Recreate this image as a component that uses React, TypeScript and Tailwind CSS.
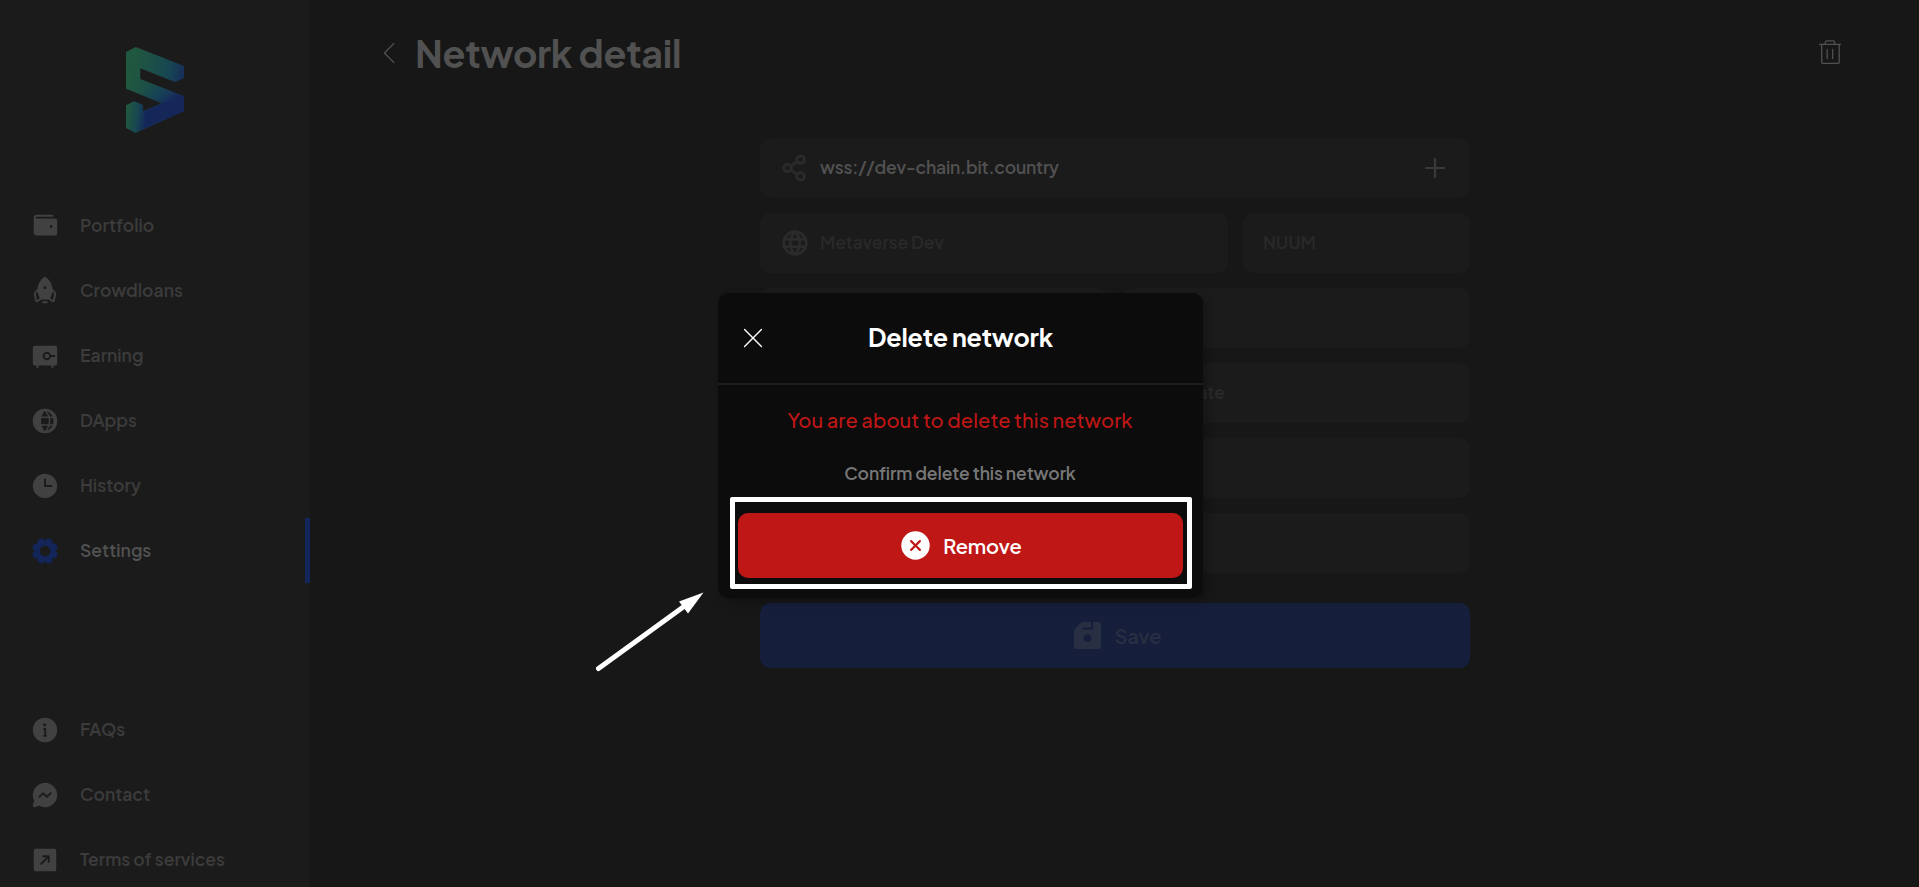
import React from "react";
import {
  PiWalletFill, PiRocketFill, PiVaultFill, PiClockFill,
  PiMessengerLogoFill, PiArrowSquareUpRightFill, PiShareNetworkBold, PiGlobeBold, PiXCircleFill,
  PiCaretLeftLight, PiXLight,
} from "react-icons/pi";

type IconProps = { className?: string };

function GlobeIcon({ className }: IconProps) {
  return (
    <svg viewBox="0 0 30 30" className={className}>
      <circle cx="15" cy="15" r="12.200" fill="currentColor" />
      <path d="M15 4.500C12.500 7 11 11 11 15s1.500 8 4 10.500A10.700 10.700 0 0 0 15 4.500Z" fill="#1b1b1b" />
      <g fill="none" stroke="currentColor" strokeWidth="1.500">
        <circle cx="15" cy="15" r="11.400" />
        <path d="M15 4.300c3 3 4.600 6.700 4.600 10.700s-1.600 7.700-4.600 10.700M10 11.300h16M10 18.900h16" />
      </g>
    </svg>
  );
}

const gearPoints = Array.from({ length: 8 }, (_, k) => {
  const t = 22.5 + 45 * k;
  return [[t - 9, 12.8], [t + 9, 12.8], [t + 19, 10.5], [t + 26, 10.5]]
    .map(([deg, r]) => {
      const a = (deg * Math.PI) / 180;
      return `${(15 + r * Math.sin(a)).toFixed(2)},${(15 - r * Math.cos(a)).toFixed(2)}`;
    })
    .join(" ");
}).join(" ");

function GearIcon({ className }: IconProps) {
  return (
    <svg viewBox="0 0 30 30" className={className}>
      <polygon points={gearPoints} fill="currentColor" stroke="currentColor" strokeWidth="0.800" strokeLinejoin="round" />
      <circle cx="15" cy="15" r="5.300" fill="#1b1b1b" />
    </svg>
  );
}

function InfoIcon({ className }: IconProps) {
  return (
    <svg viewBox="0 0 30 30" className={className}>
      <circle cx="15" cy="15" r="12.200" fill="currentColor" />
      <circle cx="14.700" cy="9.700" r="1.500" fill="#1b1b1b" />
      <path d="M13.300 13.900h1.900v7M13.200 20.900h3.600" fill="none" stroke="#1b1b1b" strokeWidth="1.800" />
    </svg>
  );
}

function FloppyIcon({ className }: IconProps) {
  return (
    <svg viewBox="0 0 27 27" className={className}>
      <path
        fillRule="evenodd"
        fill="currentColor"
        d="M8.600 0H17v5.400H9.200a1.100 1.100 0 0 0 0 2.200h9.800V0H25a2 2 0 0 1 2 2v23a2 2 0 0 1-2 2H2a2 2 0 0 1-2-2V8.600a2 2 0 0 1 .6-1.400L7.200.6A2 2 0 0 1 8.600 0ZM13.500 12.200a3.900 3.900 0 1 0 0 7.800 3.900 3.900 0 0 0 0-7.800Z"
      />
    </svg>
  );
}

function TrashIcon({ className }: IconProps) {
  return (
    <svg viewBox="0 0 30 30" className={className} fill="none" stroke="currentColor" strokeWidth="1.300" strokeLinecap="round" strokeLinejoin="round">
      <path d="M4.500 7.300h21M6.700 7.300v18.200c0 .5.300.8.800.8h15.900c.5 0 .8-.3.800-.8V7.300M10.300 7.300V5.700c0-1.200.6-1.800 1.800-1.800h5.800c1.200 0 1.800.6 1.800 1.800v1.600M12.200 12.500v9M17.700 12.500v9" />
    </svg>
  );
}

type Item = { label: string; Icon: React.ComponentType<IconProps>; active?: boolean };

const nav: Item[] = [
  { label: "Portfolio", Icon: PiWalletFill },
  { label: "Crowdloans", Icon: PiRocketFill },
  { label: "Earning", Icon: PiVaultFill },
  { label: "DApps", Icon: GlobeIcon },
  { label: "History", Icon: PiClockFill },
  { label: "Settings", Icon: GearIcon, active: true },
];
const links: Item[] = [
  { label: "FAQs", Icon: InfoIcon },
  { label: "Contact", Icon: PiMessengerLogoFill },
  { label: "Terms of services", Icon: PiArrowSquareUpRightFill },
];

function NavItem({ label, Icon, active }: Item) {
  return (
    <div className={`flex h-[65px] shrink-0 items-center pl-[30px] ${active ? "border-r-5 border-[#142559]" : ""}`}>
      <Icon className={`size-[30px] ${active ? "text-[#142559]" : "text-[#414141]"}`} />
      <span className={`ml-5 text-[17.5px] font-semibold tracking-[0.02px] ${active ? "text-[#515151]" : "text-[#3c3c3c]"}`}>{label}</span>
    </div>
  );
}

function Logo() {
  return (
    <svg width="58" height="86" viewBox="0 0 58 86">
      <defs>
        <linearGradient id="base" x1="0" y1="26" x2="58" y2="36" gradientUnits="userSpaceOnUse">
          <stop offset="0.1" stopColor="#20573f" />
          <stop offset="0.4" stopColor="#1c5048" />
          <stop offset="0.72" stopColor="#174653" />
          <stop offset="0.95" stopColor="#172f59" />
        </linearGradient>
        <linearGradient id="band" x1="26" y1="36" x2="42" y2="60" gradientUnits="userSpaceOnUse">
          <stop offset="0" stopColor="#17405a" stopOpacity="0" />
          <stop offset="0.5" stopColor="#173c59" stopOpacity="0.700" />
          <stop offset="0.9" stopColor="#152759" />
        </linearGradient>
        <linearGradient id="foot" x1="3" y1="66" x2="20" y2="68" gradientUnits="userSpaceOnUse">
          <stop offset="0" stopColor="#174653" stopOpacity="0" />
          <stop offset="0.45" stopColor="#174653" stopOpacity="0.800" />
          <stop offset="1" stopColor="#152759" />
        </linearGradient>
      </defs>
      <path d="M9.700 0 58 19v12.300L49 35 14.300 21.300V32L58 49.300V64L9.700 85.700 0 81V58.300l8-4 9 4v6l19-8L0 41.700V5Z" fill="url(#base)" />
      <path d="M14.300 32 58 49.300V64L36 56.300 0 41.700Z" fill="url(#band)" />
      <path d="M0 58.300l8-4 9 4v6l19-8 22-7V64L9.700 85.700 0 81Z" fill="url(#foot)" />
    </svg>
  );
}

function Field({ children, className = "" }: { children?: React.ReactNode; className?: string }) {
  return (
    <div className={`flex h-[60px] items-center rounded-[10px] bg-[#1b1b1b] px-5 text-[17.5px] font-semibold tracking-[-0.12px] text-[#292929] ${className}`}>
      {children}
    </div>
  );
}

export default function App() {
  return (
    <div className="relative flex h-[887px] w-full overflow-hidden bg-[#171717] font-['Plus_Jakarta_Sans','Inter',sans-serif]">
      <aside className="flex w-[310px] shrink-0 flex-col bg-[#1b1b1b]">
        <div className="flex h-[193px] shrink-0 justify-center pt-[47px]"><Logo /></div>
        <nav className="shrink-0">{nav.map((n) => <NavItem key={n.label} {...n} />)}</nav>
        <div className="mt-[114px] shrink-0">{links.map((n) => <NavItem key={n.label} {...n} />)}</div>
      </aside>
      <main className="flex flex-1 flex-col">
        <header className="flex h-[107px] items-center pr-[74px] pl-[65px] text-[#515151]">
          <PiCaretLeftLight className="mb-px size-[30px]" />
          <h1 className="ml-2.5 flex-1 text-[37.5px] font-bold tracking-[-0.27px]">Network detail</h1>
          <TrashIcon className="mb-[3px] size-[30px]" />
        </header>
        <form className="mt-[31px] ml-[450px] flex w-[710px] flex-col gap-[15px]">
          <Field>
            <PiShareNetworkBold className="size-[30px] text-[#2b2b2b]" />
            <span className="mb-0.5 ml-2.5 flex-1 tracking-[-0.2px] text-[#515151]">wss://dev-chain.bit.country</span>
            <svg viewBox="0 0 20 20" className="mr-[5px] size-5 text-[#3a3a3a]">
              <path d="M10 1v18M1 10h18" stroke="currentColor" strokeWidth="2.200" strokeLinecap="round" />
            </svg>
          </Field>
          <div className="flex gap-[15px]">
            <Field className="w-[468px]">
              <PiGlobeBold className="size-[30px] text-[#2b2b2b]" />
              <span className="mb-0.5 ml-2.5">Metaverse Dev</span>
            </Field>
            <Field className="flex-1"><span className="mb-0.5">NUUM</span></Field>
          </div>
          <div className="grid grid-cols-2 gap-[15px]"><Field /><Field /></div>
          <div className="grid grid-cols-2 gap-[15px]"><Field /><Field><span className="mb-0.5">Substrate</span></Field></div>
          <Field />
          <Field />
          <button type="button" className="mt-[15px] flex h-[65px] items-center justify-center rounded-[10px] bg-[#151e3b] pl-[5px] text-xl font-semibold tracking-[-0.1px] text-[#282f42]">
            <FloppyIcon className="mr-[14px] size-[27px]" />
            Save
          </button>
        </form>
      </main>

      <section className="absolute top-[293px] left-[718px] flex h-[305px] w-[485px] flex-col rounded-[10px] bg-[#0c0c0c] shadow-[4px_4px_8px_rgba(0,0,0,0.25)]">
        <header className="flex h-[92px] items-center border-b-2 border-[#1d1d1d] px-5 text-white">
          <PiXLight className="size-[30px]" />
          <h2 className="mr-[30px] flex-1 text-center text-[25px] font-bold tracking-[-0.2px]">Delete network</h2>
        </header>
        <p className="mt-[20px] mr-px text-center text-xl leading-[30px] font-medium tracking-[0.1px] text-[#bf1616]">You are about to delete this network</p>
        <p className="mt-[23px] mr-px text-center text-[17.5px] leading-[30px] font-semibold tracking-[-0.1px] text-[#777777]">Confirm delete this network</p>
        <button type="button" className="mt-[25px] ml-5 flex h-[65px] w-[445px] items-center justify-center rounded-[10px] bg-[#bf1616] pr-px text-xl font-semibold tracking-[-0.1px] text-white">
          <PiXCircleFill className="mr-2.5 size-[35px]" />
          Remove
        </button>
      </section>
      <div className="absolute top-[497px] left-[730px] h-[92px] w-[462px] rounded-[2px] border-5 border-white" />
      <svg className="absolute top-[590px] left-[594px]" width="114" height="84" viewBox="0 0 114 84">
        <path d="M4.500 78.500 92 15" stroke="#fff" strokeWidth="5" strokeLinecap="round" />
        <path d="M109.500 2.500 85 11.500l9 12Z" fill="#fff" />
      </svg>
    </div>
  );
}
